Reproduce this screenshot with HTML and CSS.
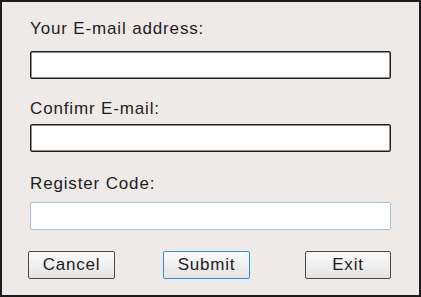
FILE: index.html
```html
<!DOCTYPE html>
<html>
<head>
<meta charset="utf-8">
<link rel="stylesheet" href="styles.css">
</head>
<body>
<div class="dialog">
  <label class="label label-first">Your E-mail address:</label>
  <div class="field"></div>
  <label class="label label-second">Confimr E-mail:</label>
  <div class="field field-second"></div>
  <label class="label label-third">Register Code:</label>
  <div class="field field-focus"></div>
  <div class="buttons">
    <button class="btn btn-cancel">Cancel</button>
    <button class="btn btn-default">Submit</button>
    <button class="btn btn-exit">Exit</button>
  </div>
</div>
</body>
</html>
```
FILE: styles.css
```css
html, body {
  margin: 0;
  padding: 0;
  background: #eeeae8;
}
.dialog {
  box-sizing: border-box;
  width: 421px;
  height: 297px;
  border: 2px solid #1c1a1b;
  background: #eeeae8;
  padding: 17px 0 0 28px;
  display: flex;
  flex-direction: column;
  align-items: flex-start;
  font-family: "Liberation Sans", Arial, sans-serif;
  color: #1e1c1d;
}
.label {
  font-size: 17px;
  line-height: 20px;
  letter-spacing: 0.85px;
  height: 20px;
}
.label-second { margin-top: 20px; }
.label-third { margin-top: 22px; }
.field {
  box-sizing: border-box;
  width: 361px;
  height: 28px;
  margin-top: 12px;
  background: #fffefe;
  border: 1px solid #1e1c1d;
  border-radius: 2px;
  box-shadow: inset 0 0 0 0.5px #1e1c1d;
}
.field-second { margin-top: 5px; }
.field-focus {
  margin-top: 8px;
  border: 1px solid #a8c3d8;
  box-shadow: none;
}
.buttons {
  margin-top: 21px;
  margin-left: -2px;
  display: flex;
}
.btn {
  box-sizing: border-box;
  width: 87px;
  height: 28px;
  padding: 0;
  margin: 0;
  font-family: "Liberation Sans", Arial, sans-serif;
  font-size: 17px;
  letter-spacing: 0.8px;
  color: #1e1c1d;
  background: linear-gradient(#fbfbfb, #e3e3e3);
  border: 1px solid #4a4848;
  border-radius: 2px;
}
.btn-default {
  margin-left: 48px;
  border-color: #2d8fd0;
}
.btn-exit {
  margin-left: 55px;
  width: 86px;
}
```
